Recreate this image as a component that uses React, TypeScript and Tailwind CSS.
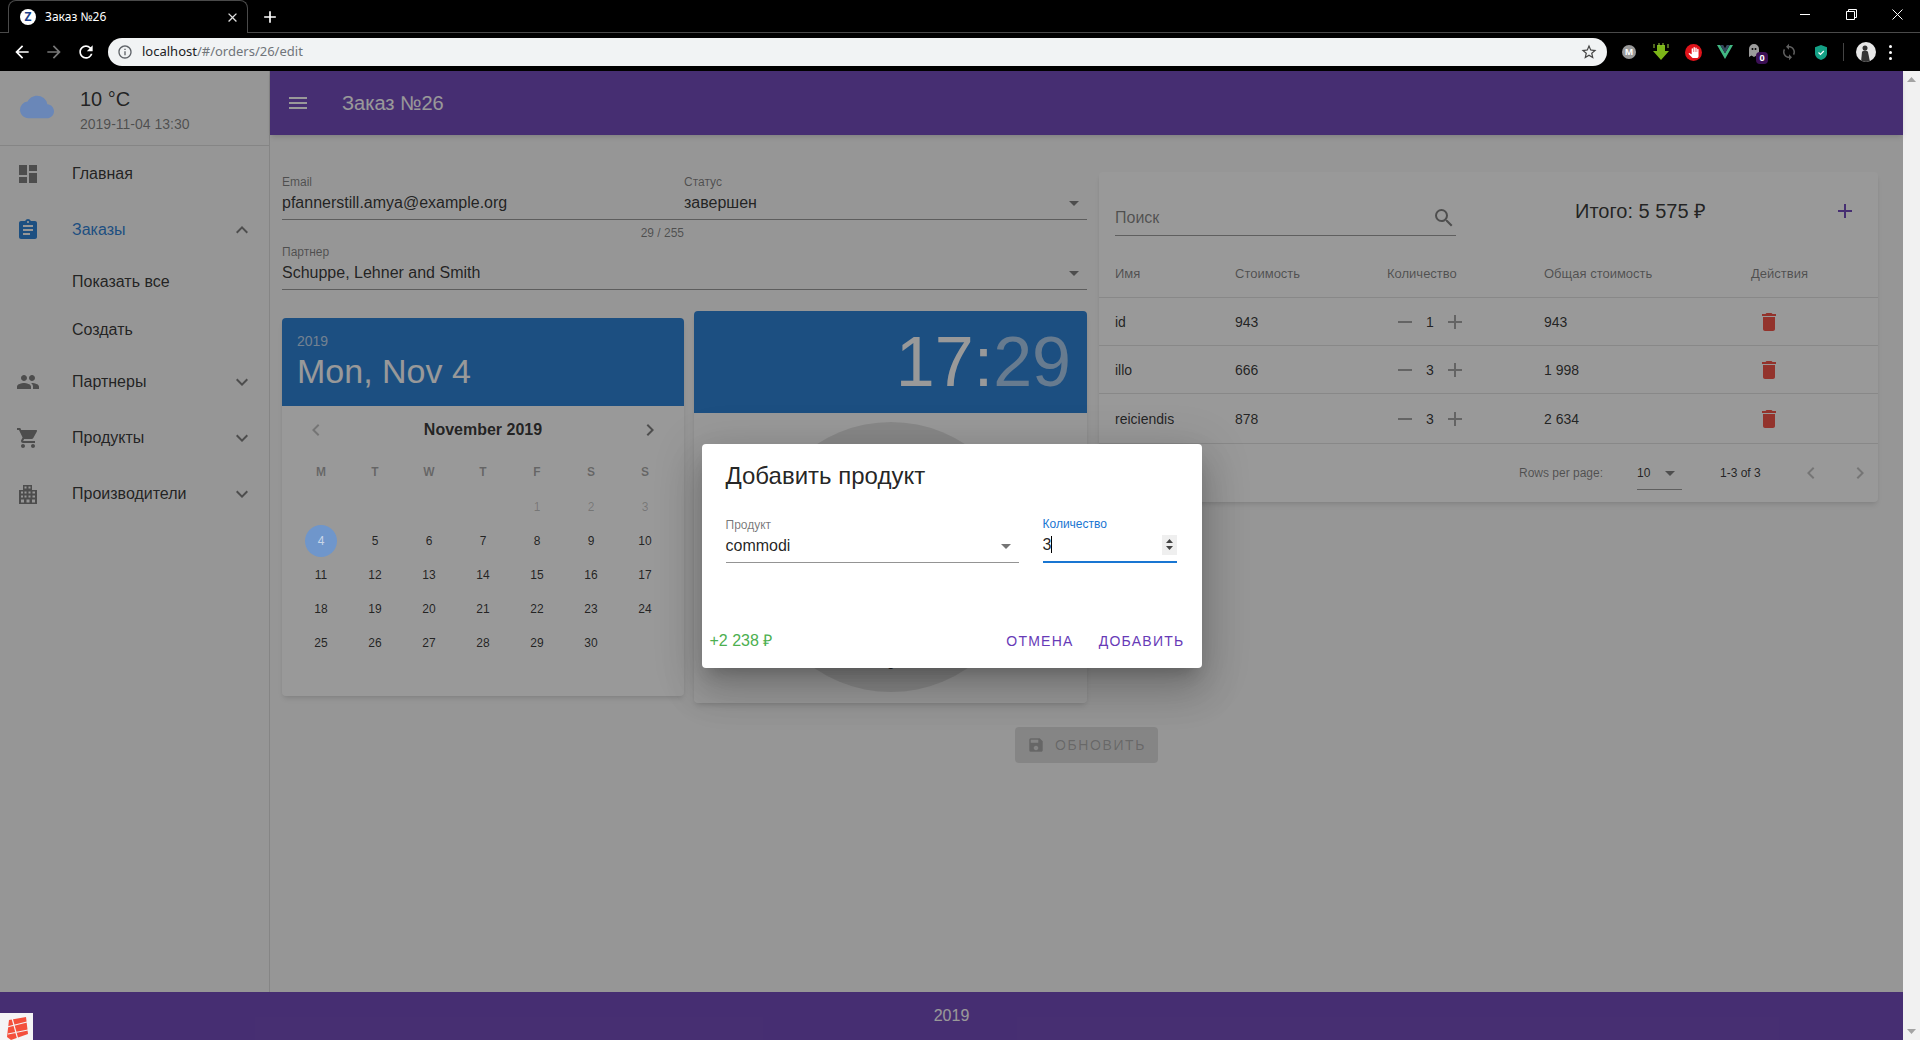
import React from "react";
import {
  MdDashboard, MdAssignment, MdPeople, MdShoppingCart, MdExpandMore, MdExpandLess, MdSearch, MdAdd, MdRemove,
  MdDelete, MdSave, MdMenu, MdCloud, MdChevronLeft, MdChevronRight, MdArrowDropDown, MdInfoOutline, MdStarBorder,
  MdRefresh, MdArrowBack, MdArrowForward, MdClose, MdPanTool, MdSync,
} from "react-icons/md";

function BuildingIcon() {
  return (
    <svg width="24" height="24" viewBox="0 0 24 24" fill="currentColor">
      <path fillRule="evenodd" d="M7 3h9v5h5v14H3V8h4V3zm1.5 1.5v2h2v-2h-2zm4 0v2h2v-2h-2zM8.500 9.500v2h2v-2h-2zm4 0v2h2v-2h-2zm4 0v2h2.500v-2H16.500zM5 9.500v2h2v-2H5zm0 4v2h2v-2H5zm3.500 0v2h2v-2h-2zm4 0v2h2v-2h-2zm4 0v2h2.500v-2H16.500zM5 17.500v3h3v-3H5zm5.500 0v3h3v-3h-3zm5.500 0v3h3v-3h-3z" />
    </svg>
  );
}

function Field({ label, value, arrow, className, labelClass, lineClass, children }: {
  label: string; value?: string; arrow?: boolean; className?: string; labelClass?: string; lineClass?: string; children?: React.ReactNode;
}) {
  return (
    <div className={`h-[48px] flex flex-col justify-end pb-[4px] ${lineClass ?? "border-b border-[#000000]/[0.42]"} ${className ?? ""}`}>
      <div className={`text-xs leading-4 mb-[1px] ${labelClass ?? "text-[#000000]/[0.54]"}`}>{label}</div>
      <div className="flex items-center h-6 text-base leading-6 text-[#000000]/[0.87]">
        <span className="flex-1 flex items-center">{value}{children}</span>
        {arrow && <MdArrowDropDown size={24} className="text-[#000000]/[0.54] mr-[1px]" />}
      </div>
    </div>
  );
}

function NavItem({ icon, label, open, active }: { icon: React.ReactNode; label: string; open?: boolean; active?: boolean }) {
  return (
    <div className={`h-[56px] flex items-center pl-4 pr-[15px] gap-8 text-base ${active ? "text-[#1976d2]" : "text-[#000000]/[0.87]"}`}>
      <span className={active ? "text-[#1976d2]" : "text-[#000000]/[0.54]"}>{icon}</span>
      <span className="flex-1">{label}</span>
      {open ? <MdExpandLess size={24} className="text-[#000000]/[0.54]" /> : <MdExpandMore size={24} className="text-[#000000]/[0.54]" />}
    </div>
  );
}

function DatePicker() {
  const heads = ["M", "T", "W", "T", "F", "S", "S"];
  const cells: (number | null)[] = [null, null, null, null];
  for (let i = 1; i <= 30; i++) cells.push(i);
  return (
    <div className="w-[402px] h-[378px] mt-[28px] bg-white rounded shadow-md overflow-hidden shrink-0">
      <div className="h-[88px] bg-[#1976d2] text-white pl-[15px] pt-[14px]">
        <div className="text-sm leading-[18px] text-white/70">2019</div>
        <div className="text-[34px] leading-[40px] mt-[1px]">Mon, Nov 4</div>
      </div>
      <div className="h-[48px] flex items-center justify-between px-[22px]">
        <MdChevronLeft size={24} className="text-[#000000]/[0.26]" />
        <span className="text-base font-bold text-[#000000]/[0.87]">November 2019</span>
        <MdChevronRight size={24} className="text-[#000000]/[0.54]" />
      </div>
      <div className="px-3 grid grid-cols-7">
        {heads.map((h, i) => (
          <div key={i} className="h-[36px] flex items-center justify-center text-xs font-bold text-[#000000]/[0.38]">{h}</div>
        ))}
        {cells.map((d, i) => (
          <div key={i} className="h-[34px] flex items-center justify-center text-xs">
            {d === 4 ? (
              <span className="relative z-20 w-[32px] h-[32px] rounded-full bg-[#6f96cb] flex items-center justify-center text-[#c9d6e8]">4</span>
            ) : d !== null ? (
              <span className={d <= 3 ? "text-[#000000]/[0.26]" : "text-[#000000]/[0.87]"}>{d}</span>
            ) : null}
          </div>
        ))}
      </div>
    </div>
  );
}

function TimePicker() {
  return (
    <div className="w-[393px] h-[392px] mt-[21px] bg-white rounded shadow-md overflow-hidden shrink-0">
      <div className="h-[102px] bg-[#1976d2] text-white flex items-center justify-end pr-[16px] text-[70px] leading-none">
        <span>17:</span><span className="text-white/60">29</span>
      </div>
      <div className="pt-[9px] flex justify-center">
        <div className="relative w-[270px] h-[270px] rounded-full bg-[#000000]/[0.12]">
          <span className="absolute left-1/2 -translate-x-1/2 top-[19px] text-base text-[#000000]/[0.87]">0</span>
          <span className="absolute left-1/2 -translate-x-1/2 bottom-[20px] text-base leading-4 text-[#000000]/[0.87]">6</span>
        </div>
      </div>
    </div>
  );
}

const rows = [
  { name: "id", price: "943", qty: 1, total: "943" },
  { name: "illo", price: "666", qty: 3, total: "1 998" },
  { name: "reiciendis", price: "878", qty: 3, total: "2 634" },
];

function ProductsCard() {
  const cols = "grid grid-cols-[136px_152px_157px_207px_127px]";
  return (
    <div className="w-[779px] h-[330px] bg-white rounded shadow-md shrink-0">
      <div className="h-[78px] flex pl-4">
        <div className="w-[341px] h-[64px] pt-[34px] border-b border-[#000000]/[0.42] flex items-start justify-between text-base leading-6 text-[#000000]/[0.54]">
          <span>Поиск</span>
          <MdSearch size={24} />
        </div>
        <div className="ml-[119px] mt-[25px] text-xl leading-7 text-[#000000]/[0.87] whitespace-nowrap">Итого: 5 575 ₽</div>
        <MdAdd size={24} className="ml-auto mr-[21px] mt-[27px] text-[#673ab7]" />
      </div>
      <div className={`${cols} h-[48px] items-center text-[13px] text-[#000000]/[0.54] border-b border-[#000000]/[0.12]`}>
        <span className="pl-4">Имя</span><span>Стоимость</span><span>Количество</span><span>Общая стоимость</span><span>Действия</span>
      </div>
      {rows.map((r, i) => (
        <div key={r.name} className={`${cols} ${i === 2 ? "h-[50px]" : "h-[48px]"} items-center text-sm text-[#000000]/[0.87] border-b border-[#000000]/[0.12]`}>
          <span className="pl-4">{r.name}</span>
          <span>{r.price}</span>
          <span className="flex items-center pl-[6px] text-[#000000]/[0.38]">
            <MdRemove size={24} />
            <span className="w-[26px] text-center text-[#000000]/[0.87]">{r.qty}</span>
            <MdAdd size={24} />
          </span>
          <span>{r.total}</span>
          <span className="pl-[6px]"><MdDelete size={24} className="text-[#f44336]" /></span>
        </div>
      ))}
      <div className="h-[58px] flex items-center text-xs text-[#000000]/[0.54]">
        <span className="ml-[420px] w-[83px] whitespace-nowrap">Rows per page:</span>
        <div className="ml-[35px] w-[45px] h-[33px] flex items-center justify-between border-b border-[#000000]/[0.42] text-[#000000]/[0.87]">
          <span>10</span>
          <MdArrowDropDown size={24} className="text-[#000000]/[0.54] mr-[0px]" />
        </div>
        <span className="ml-[38px] w-[41px] whitespace-nowrap text-[#000000]/[0.87]">1-3 of 3</span>
        <MdChevronLeft size={24} className="ml-[38px] text-[#000000]/[0.26]" />
        <MdChevronRight size={24} className="ml-[25px] text-[#000000]/[0.26]" />
      </div>
    </div>
  );
}

function Dialog() {
  return (
    <div className="absolute inset-0 right-[17px] z-30 flex items-center justify-center">
      <div className="w-[500px] h-[224px] bg-white rounded shadow-[0_11px_15px_-7px_rgba(0,0,0,0.2),0_24px_38px_3px_rgba(0,0,0,0.14),0_9px_46px_8px_rgba(0,0,0,0.12)]">
        <div className="pl-6 pt-4 text-2xl leading-8 text-[#000000]/[0.87]">Добавить продукт</div>
        <div className="flex pl-6 mt-[23px] gap-6">
          <Field label="Продукт" value="commodi" arrow className="w-[293px]" />
          <Field label="Количество" className="w-[134px]" labelClass="text-[#1976d2]" lineClass="border-b-2 border-[#1976d2]">
            <span className="flex-1 flex items-center">
              3<span className="inline-block w-px h-[17px] bg-black" />
            </span>
            <span className="w-[15px] h-[20px] bg-[#efefef] flex flex-col items-center justify-center gap-[3px]">
              <svg width="7" height="4" viewBox="0 0 7 4"><path d="M3.500 0L7 4H0z" fill="#444" /></svg>
              <svg width="7" height="4" viewBox="0 0 7 4"><path d="M0 0h7L3.500 4z" fill="#444" /></svg>
            </span>
          </Field>
        </div>
        <div className="flex items-center h-[36px] mt-[60px] pl-2 pr-[17px]">
          <span className="flex-1 text-base text-[#4caf50]">+2 238 ₽</span>
          <span className="text-sm tracking-[0.09em] text-[#673ab7]">ОТМЕНА</span>
          <span className="ml-[25px] text-sm tracking-[0.09em] text-[#673ab7]">ДОБАВИТЬ</span>
        </div>
      </div>
    </div>
  );
}

function ExtBox({ children }: { children: React.ReactNode }) {
  return <div className="w-[32px] h-[32px] flex items-center justify-center relative">{children}</div>;
}

function Extensions() {
  return (
    <div className="flex items-center ml-[6px]">
      <ExtBox>
        <span className="w-[14px] h-[14px] rounded-full bg-[#9a9a9a] text-white text-[9px] font-bold flex items-center justify-center">M</span>
      </ExtBox>
      <ExtBox>
        <svg width="16" height="18" viewBox="0 0 16 18">
          <path d="M4 2h8v6h4l-8 9-8-9h4z" fill="#7cb518" />
          <path d="M1 1v4M15 1v4M6 0v3M10 0v3" stroke="#9ccc3c" strokeWidth="1" />
        </svg>
      </ExtBox>
      <ExtBox>
        <span className="w-[17px] h-[17px] rounded-full bg-[#e0131a] flex items-center justify-center">
          <MdPanTool size={11} className="text-white" />
        </span>
      </ExtBox>
      <ExtBox>
        <svg width="16" height="14" viewBox="0 0 16 14">
          <path d="M0 0h3.200L8 8.300 12.800 0H16L8 14z" fill="#41b883" />
          <path d="M3.200 0h3L8 3.200 9.800 0h3L8 8.300z" fill="#35495e" />
        </svg>
      </ExtBox>
      <ExtBox>
        <svg width="13" height="16" viewBox="0 0 13 16" className="-translate-x-[3px] -translate-y-[1px]">
          <path d="M1 14V6a5 5 0 0 1 10 0v8l-2.500-1.500L6 14l-2.500-1.500z" fill="#9b9b9b" />
          <circle cx="4.500" cy="6" r="1" fill="#000" /><circle cx="7.500" cy="6" r="1" fill="#000" />
        </svg>
        <span className="absolute left-[15px] top-[16px] w-[12px] h-[12px] bg-[#3b0f55] rounded-sm text-white text-[9px] leading-[12px] font-bold text-center">0</span>
      </ExtBox>
      <ExtBox>
        <MdSync size={18} className="text-[#5f5f5f]" />
      </ExtBox>
      <ExtBox>
        <svg width="12" height="15" viewBox="0 0 12 15">
          <path d="M6 0l6 2.200v6.300C12 12 9 14 6 15c-3-1-6-3-6-6.500V2.200z" fill="#14a085" />
          <path d="M3.500 7.500l2 2 3.300-3.500" stroke="#fff" strokeWidth="1.200" fill="none" />
        </svg>
      </ExtBox>
      <div className="w-px h-[18px] bg-[#444] ml-[6px]" />
      <div className="ml-[12px] w-[20px] h-[20px] rounded-full bg-[#e8e8e8] overflow-hidden">
        <svg width="20" height="20" viewBox="0 0 20 20">
          <circle cx="9" cy="6" r="2.500" fill="#333" />
          <path d="M5 20l1-10c1-2 5-2 6 0l2 10z" fill="#333" />
        </svg>
      </div>
      <div className="ml-[12px] w-[4px] flex flex-col items-center gap-[3px]">
        <span className="w-[3px] h-[3px] rounded-full bg-white" />
        <span className="w-[3px] h-[3px] rounded-full bg-white" />
        <span className="w-[3px] h-[3px] rounded-full bg-white" />
      </div>
    </div>
  );
}

function BrowserChrome() {
  return (
    <div className="bg-black shrink-0 font-['Noto_Sans',sans-serif]">
      <div className="h-[33px] flex border-b border-[#4a4a4a]">
        <div className="ml-[8px] w-[240px] h-[33px] bg-black rounded-t-lg border border-b-0 border-[#4a4a4a] flex items-center pl-[11px] pr-[6px] text-white text-xs">
          <span className="w-[16px] h-[16px] rounded-full bg-white flex items-center justify-center text-[#1b3f8b] text-[12px] font-bold leading-none">Z</span>
          <span className="ml-[9px] flex-1 whitespace-nowrap">Заказ №26</span>
          <MdClose size={15} className="text-[#e0e0e0] mr-[1px]" />
        </div>
        <MdAdd size={20} className="ml-[12px] mt-[7px] text-white" />
        <div className="ml-auto flex text-white">
          <div className="w-[46px] h-[28px] flex items-center justify-center"><span className="w-[10px] h-px bg-white" /></div>
          <div className="w-[46px] h-[28px] flex items-center justify-center">
            <svg width="11" height="11" viewBox="0 0 11 11" fill="none" stroke="#fff"><path d="M.5 2.500h8v8h-8zM2.500 2.500v-2h8v8h-2" /></svg>
          </div>
          <div className="w-[46px] h-[28px] flex items-center justify-center">
            <svg width="11" height="11" viewBox="0 0 11 11" stroke="#fff"><path d="M.5.5l10 10M10.500.5l-10 10" /></svg>
          </div>
        </div>
      </div>
      <div className="h-[38px] flex items-center">
        <MdArrowBack size={20} className="ml-[12px] text-white" />
        <MdArrowForward size={20} className="ml-[12px] text-[#777]" />
        <MdRefresh size={20} className="ml-[12px] text-white" />
        <div className="ml-[12px] w-[1499px] h-[28px] rounded-full bg-[#f1f3f4] flex items-center pl-[9px] pr-[9px]">
          <MdInfoOutline size={16} className="text-[#5f6368]" />
          <span className="ml-[9px] flex-1 text-[13px] whitespace-nowrap text-[#202124]">
            localhost<span className="text-[#70757a]">/#/orders/26/edit</span>
          </span>
          <MdStarBorder size={18} className="text-[#444]" />
        </div>
        <Extensions />
      </div>
    </div>
  );
}

function NavItemPlain({ icon, label }: { icon: React.ReactNode; label: string }) {
  return (
    <div className="h-[56px] flex items-center px-4 gap-8 text-base text-[#000000]/[0.87]">
      <span className="text-[#000000]/[0.54]">{icon}</span>
      <span>{label}</span>
    </div>
  );
}

function Sidebar() {
  return (
    <div className="w-[270px] shrink-0 bg-[#fafafa] border-r border-[#000000]/[0.12]">
      <div className="h-[75px] border-b border-[#000000]/[0.12] flex items-center pl-[20px]">
        <MdCloud size={34} className="relative z-20 text-[#6a87b8] -mt-[2px]" />
        <div className="ml-[26px] pt-[4px]">
          <div className="text-xl leading-6 text-[#000000]/[0.87]">10 °C</div>
          <div className="text-sm leading-5 mt-[3px] text-[#000000]/[0.54]">2019-11-04 13:30</div>
        </div>
      </div>
      <NavItemPlain icon={<MdDashboard size={24} />} label="Главная" />
      <NavItem icon={<MdAssignment size={24} />} label="Заказы" open active />
      <div className="h-[48px] flex items-center pl-[72px] text-base text-[#000000]/[0.87]">Показать все</div>
      <div className="h-[48px] flex items-center pl-[72px] text-base text-[#000000]/[0.87]">Создать</div>
      <NavItem icon={<MdPeople size={24} />} label="Партнеры" />
      <NavItem icon={<MdShoppingCart size={24} />} label="Продукты" />
      <NavItem icon={<BuildingIcon />} label="Производители" />
    </div>
  );
}

export default function App() {
  return (
    <div className="h-screen w-full flex flex-col overflow-hidden font-['Liberation_Sans',sans-serif]">
      <BrowserChrome />
      <div className="flex-1 flex relative min-h-0">
        <div className="flex-1 min-w-0 flex flex-col relative">
          <div className="flex-1 flex min-h-0 bg-[#fafafa]">
            <Sidebar />
            <div className="flex-1 min-w-0 flex flex-col">
              <div className="h-[64px] shrink-0 bg-[#673ab7] shadow-md flex items-center pl-4 text-white">
                <MdMenu size={24} />
                <span className="ml-[32px] text-xl">Заказ №26</span>
              </div>
              <div className="px-3 pt-[37px]">
                <div className="flex gap-3 items-start">
                  <div className="w-[805px] shrink-0">
                    <div className="flex">
                      <Field label="Email" value="pfannerstill.amya@example.org" className="w-[402px]" />
                      <Field label="Статус" value="завершен" arrow className="flex-1" />
                    </div>
                    <div className="w-[402px] h-[22px] pt-[5px] text-right text-xs leading-4 text-[#000000]/[0.54]">29 / 255</div>
                    <Field label="Партнер" value="Schuppe, Lehner and Smith" arrow />
                    <div className="flex gap-[10px] items-start">
                      <DatePicker />
                      <TimePicker />
                    </div>
                  </div>
                  <ProductsCard />
                </div>
                <div className="flex justify-center mt-[24px]">
                  <div className="h-[36px] w-[143px] rounded bg-[#000000]/[0.12] flex items-center justify-center gap-[10px] text-sm tracking-[0.115em] text-[#000000]/[0.26]">
                    <MdSave size={18} />
                    <span>ОБНОВИТЬ</span>
                  </div>
                </div>
              </div>
            </div>
          </div>
          <div className="h-[48px] shrink-0 bg-[#673ab7] flex items-center justify-center text-base text-white">2019</div>
          <div className="absolute inset-0 z-10 bg-[#212121]/[0.46]" />
          <div className="absolute left-0 bottom-0 z-20 w-[33px] h-[27px] bg-[#f5f5f5] flex items-start justify-center pt-[4px]">
            <svg width="22" height="23" viewBox="0 0 22 23">
              <path d="M3 3l17-3 2 17-17 6-4-3z" fill="#f4503c" />
              <path d="M1 10l20-5M6 1l6 22M2 17l20-4" stroke="#f5f5f5" strokeWidth="1.200" fill="none" />
            </svg>
          </div>
        </div>
        <div className="w-[17px] shrink-0 bg-[#f1f1f1] flex flex-col items-center justify-between py-[6px]">
          <svg width="9" height="5" viewBox="0 0 9 5"><path d="M4.500 0L9 5H0z" fill="#a3a3a3" /></svg>
          <svg width="9" height="5" viewBox="0 0 9 5"><path d="M0 0h9L4.500 5z" fill="#a3a3a3" /></svg>
        </div>
        <Dialog />
      </div>
    </div>
  );
}
